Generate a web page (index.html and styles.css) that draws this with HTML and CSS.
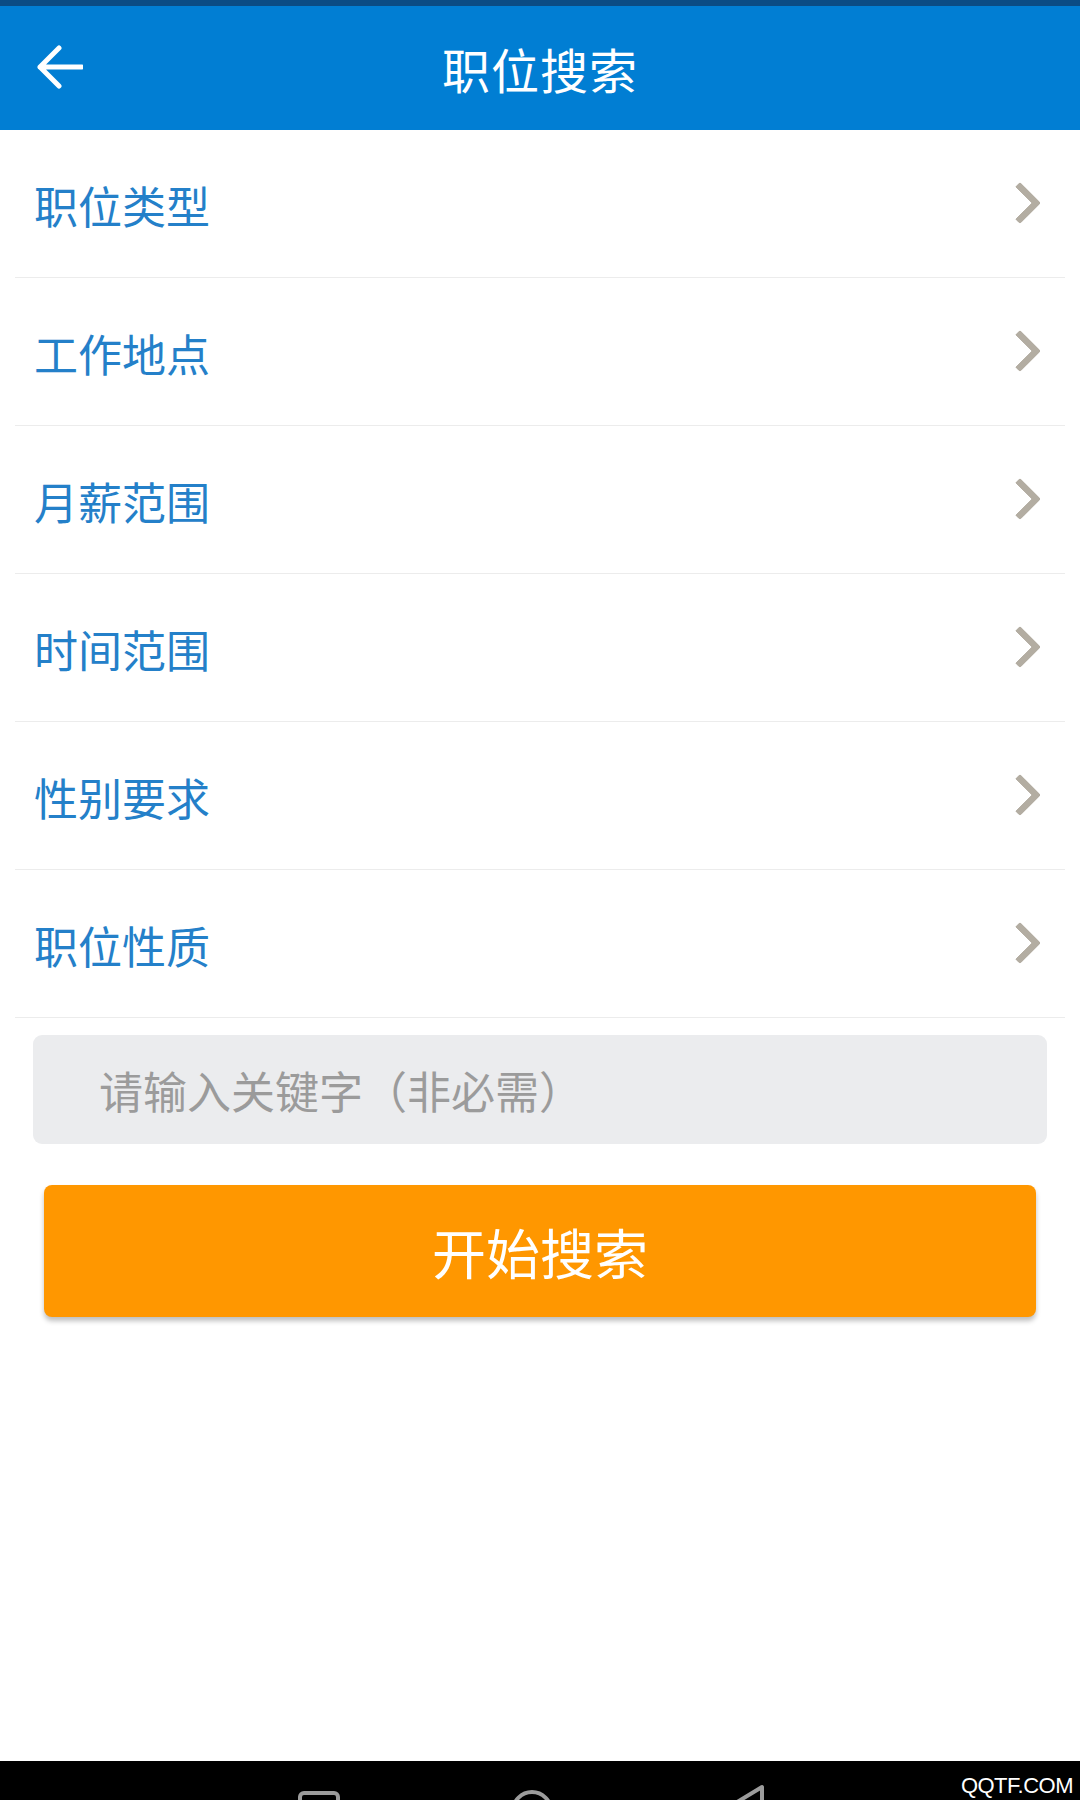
FILE: index.html
```html
<!DOCTYPE html>
<html lang="zh-CN">
<head>
  <meta charset="UTF-8" />
  <meta name="viewport" content="width=device-width, initial-scale=1.0" />
  <title>职位搜索</title>
  <link rel="stylesheet" href="styles.css">
</head>
<body>
  <div class="page">
    <header class="topbar">
      <button class="back" aria-label="返回">
        <svg width="46" height="44" viewBox="0 0 46 44">
          <path d="M22 3 L3 22 L22 41 M3 22 H45" fill="none" stroke="#fff" stroke-width="5" stroke-linecap="round" stroke-linejoin="round"/>
        </svg>
      </button>
      <h1>职位搜索</h1>
    </header>

    <main class="content">
      <ul class="filters">
        <li><span>职位类型</span><i class="chev"></i></li>
        <li><span>工作地点</span><i class="chev"></i></li>
        <li><span>月薪范围</span><i class="chev"></i></li>
        <li><span>时间范围</span><i class="chev"></i></li>
        <li><span>性别要求</span><i class="chev"></i></li>
        <li><span>职位性质</span><i class="chev"></i></li>
      </ul>

      <input class="keyword" type="text" placeholder="请输入关键字（非必需）" />

      <button class="search">开始搜索</button>
    </main>

    <footer class="navbar">
      <svg width="1080" height="39" viewBox="0 0 1080 39">
        <g fill="none" stroke="#9c9c9c" stroke-width="4" stroke-linejoin="round">
          <rect x="300" y="32" width="38" height="38" rx="4"/>
          <circle cx="532" cy="50" r="19"/>
          <path d="M762 26 V72 L724 49 Z"/>
        </g>
      </svg>
      <span class="mark">QQTF.COM</span>
    </footer>
  </div>
</body>
</html>
```

FILE: styles.css
```css
body {
  margin: 0;
  padding: 0;
  background: #fff;
  font-family: "Noto Sans CJK SC", "Noto Sans", sans-serif;
}
.page {
  min-height: 1800px;
  display: flex;
  flex-direction: column;
}
.topbar {
  height: 124px;
  background: #017ed3;
  border-top: 6px solid #0b4c84;
  display: flex;
  align-items: center;
  justify-content: center;
  position: relative;
}
.topbar h1 {
  margin: 0;
  color: #fff;
  font-size: 48px;
  font-weight: normal;
  letter-spacing: 1px;
}
.back {
  position: absolute;
  left: 37px;
  top: 39px;
  padding: 0;
  border: 0;
  background: none;
  display: flex;
}
.content {
  flex: 1;
  display: flex;
  flex-direction: column;
}
.filters {
  list-style: none;
  margin: 0 15px;
  padding: 0;
}
.filters li {
  height: 147px;
  border-bottom: 1px solid #ececec;
  display: flex;
  align-items: center;
  justify-content: space-between;
  padding: 0 24px 0 19px;
}
.filters li span {
  color: #2480c9;
  font-size: 44px;
  margin-top: 2px;
}
.chev {
  width: 23px;
  height: 23px;
  border-top: 7px solid #b3ada2;
  border-right: 7px solid #b3ada2;
  border-radius: 3px;
  transform: rotate(45deg);
  margin-right: 6px;
  margin-top: -2px;
}
.keyword {
  margin: 17px 33px 0;
  height: 109px;
  box-sizing: border-box;
  border: 0;
  border-radius: 9px;
  background: #ebecee;
  padding: 0 0 0 66px;
  font-family: inherit;
  font-size: 44px;
  color: #333;
  outline: none;
}
.keyword::placeholder {
  color: #9b9b9b;
}
.search {
  margin: 41px 44px 0;
  height: 132px;
  border: 0;
  border-radius: 8px;
  background: #ff9700;
  color: #fff;
  font-family: inherit;
  font-size: 54px;
  box-shadow: 0 4px 5px rgba(0, 0, 0, 0.25);
}
.navbar {
  height: 39px;
  background: #000;
  position: relative;
  overflow: hidden;
}
.navbar svg {
  display: block;
}
.mark {
  position: absolute;
  right: 7px;
  top: 12px;
  color: #fff;
  font-family: "Liberation Sans", Arial, sans-serif;
  font-size: 22px;
  letter-spacing: -0.5px;
}
```
